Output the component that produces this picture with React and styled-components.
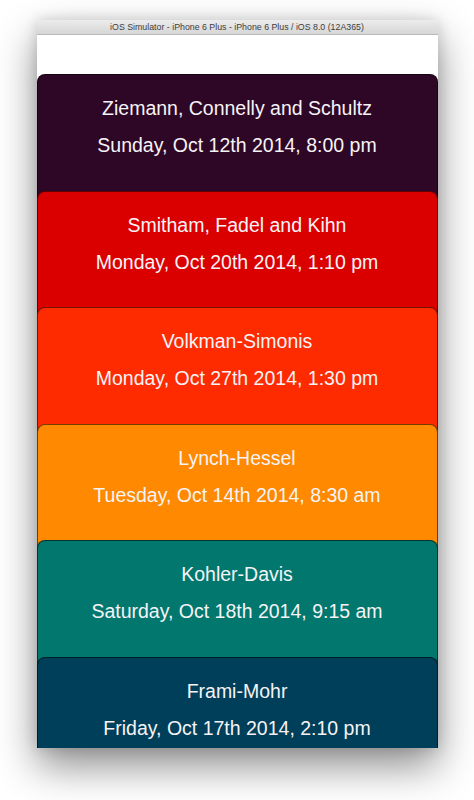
import React from "react";
import styled, { createGlobalStyle } from "styled-components";

const Global = createGlobalStyle`
  html, body { margin: 0; padding: 0; background: #ffffff; }
  body { font-family: "Liberation Sans", Arial, sans-serif; }
`;

const Stage = styled.div`
  width: 474px;
  height: 800px;
  display: flex;
  justify-content: center;
  padding-top: 20px;
  box-sizing: border-box;
  background: #ffffff;
  overflow: hidden;
`;

const Window = styled.div`
  width: 401px;
  height: 728px;
  display: flex;
  flex-direction: column;
  border-radius: 4px 4px 0 0;
  box-shadow: 0 18px 40px rgba(0, 0, 0, 0.45), 0 0 14px rgba(0, 0, 0, 0.15);
  background: #ffffff;
  overflow: hidden;
`;

const TitleBar = styled.div`
  height: 15px;
  flex: none;
  display: flex;
  align-items: center;
  justify-content: center;
  background: linear-gradient(#ececec, #d6d6d6);
  border-bottom: 1px solid #b9b9b9;
  box-sizing: border-box;
  font-family: "Liberation Sans", Arial, sans-serif;
  font-size: 8.8px;
  color: #404040;
`;

const Screen = styled.div`
  flex: 1;
  display: flex;
  flex-direction: column;
  padding-top: 39px;
  background: #ffffff;
  overflow: hidden;
`;

const Card = styled.div`
  flex: none;
  height: 131px;
  margin-bottom: -14.4px;
  background: ${(p) => p.$bg};
  border: 1px solid rgba(0, 0, 0, 0.55);
  border-radius: 8px 8px 0 0;
  box-sizing: border-box;
  display: flex;
  flex-direction: column;
  align-items: center;
  padding-top: 21px;
  gap: 13px;
  color: #f6f3f6;
  font-family: "Liberation Sans", Arial, sans-serif;
  font-size: 19.5px;
  line-height: 24px;
`;

const Line = styled.div`
  white-space: nowrap;
`;

const events = [
  { name: "Ziemann, Connelly and Schultz", date: "Sunday, Oct 12th 2014, 8:00 pm", bg: "#2d0725" },
  { name: "Smitham, Fadel and Kihn", date: "Monday, Oct 20th 2014, 1:10 pm", bg: "#db0000" },
  { name: "Volkman-Simonis", date: "Monday, Oct 27th 2014, 1:30 pm", bg: "#fe2a00" },
  { name: "Lynch-Hessel", date: "Tuesday, Oct 14th 2014, 8:30 am", bg: "#ff8900" },
  { name: "Kohler-Davis", date: "Saturday, Oct 18th 2014, 9:15 am", bg: "#01776e" },
  { name: "Frami-Mohr", date: "Friday, Oct 17th 2014, 2:10 pm", bg: "#003f59" },
];

export default function App() {
  return (
    <>
      <Global />
      <Stage>
        <Window>
          <TitleBar>iOS Simulator - iPhone 6 Plus - iPhone 6 Plus / iOS 8.0 (12A365)</TitleBar>
          <Screen>
            {events.map((e) => (
              <Card key={e.name} $bg={e.bg}>
                <Line>{e.name}</Line>
                <Line>{e.date}</Line>
              </Card>
            ))}
          </Screen>
        </Window>
      </Stage>
    </>
  );
}
